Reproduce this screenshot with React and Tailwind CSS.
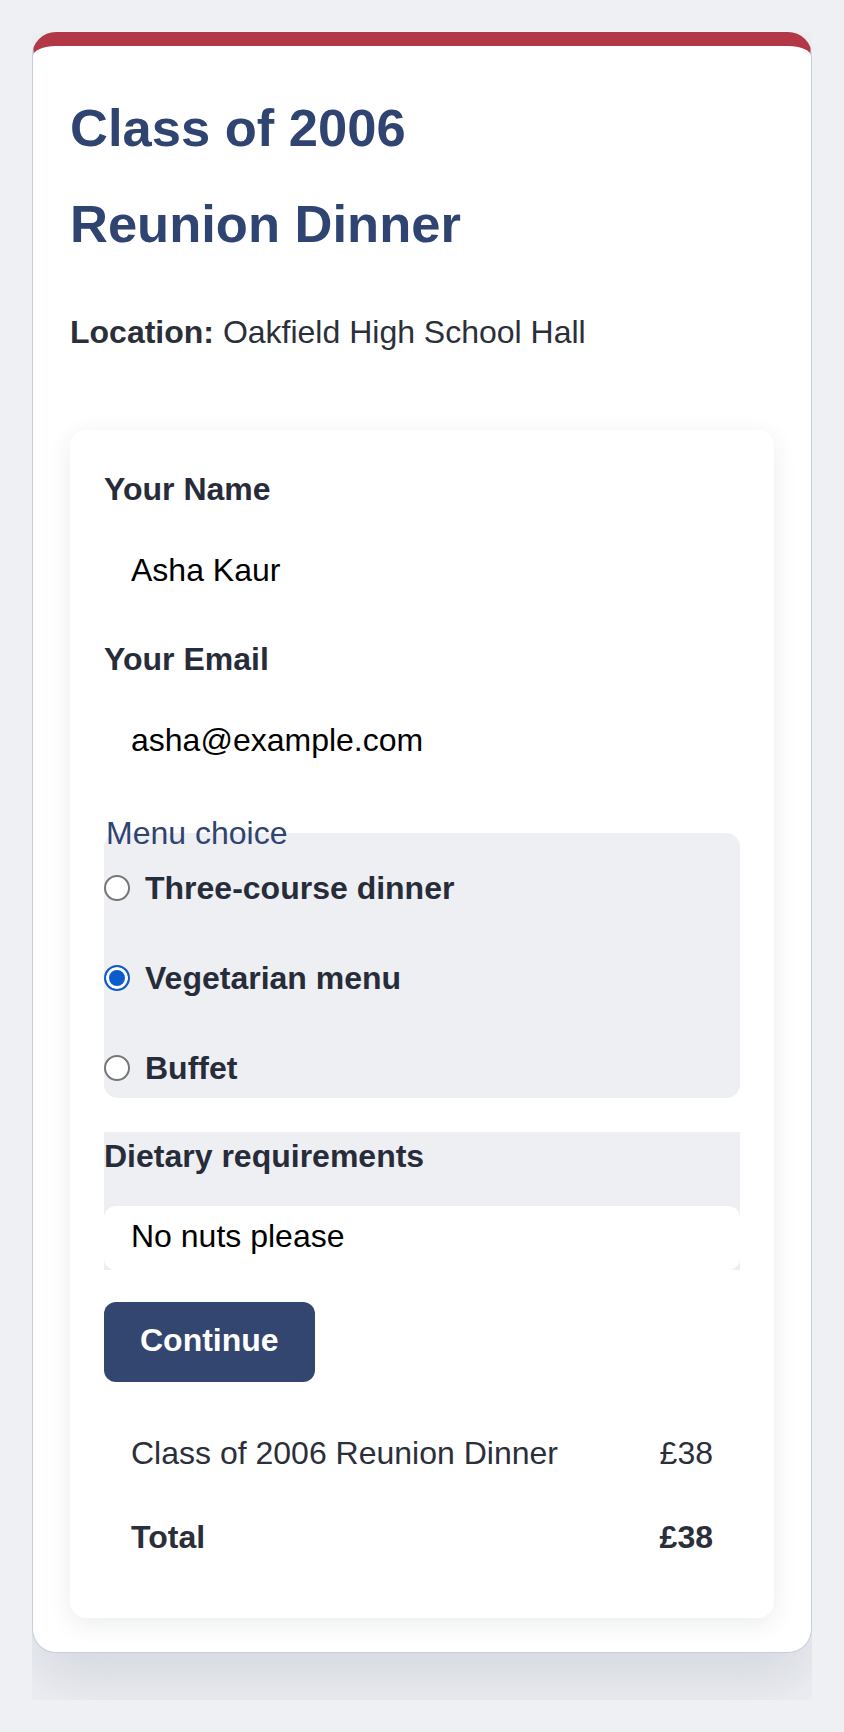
export default function App() {
  const options = [
    { id: "three", label: "Three-course dinner", checked: false },
    { id: "veg", label: "Vegetarian menu", checked: true },
    { id: "buffet", label: "Buffet", checked: false },
  ];
  return (
    <div className="min-h-screen bg-[#eef0f4] pt-[32px] font-['Liberation_Sans',Arial,sans-serif]">
      <div className="mx-[32px] overflow-hidden pb-[47px]">
        <div className="rounded-[24px] border border-[#c6cede] border-t-[14px] border-t-[#b23847] bg-white px-[37px] pt-[34px] pb-[34px] shadow-[0_30px_60px_rgba(30,40,70,0.12)]">
          <h1 className="text-[52.5px] leading-[96px] font-bold text-balance text-[#2f4471]">
            Class of 2006 Reunion Dinner
          </h1>
          <p className="mt-[36px] text-[32px] leading-[48px] text-[#2b2f3a]">
            <strong className="font-bold">Location:</strong> Oakfield High School Hall
          </p>

          <form
            className="mt-[74px] rounded-[16px] bg-white px-[34px] pt-[35px] pb-[39px] shadow-[0_6px_24px_rgba(30,40,70,0.09)]"
            onSubmit={(e) => e.preventDefault()}
          >
            <label className="block text-[32px] leading-[48px] font-bold text-[#272c3a]" htmlFor="name">
              Your Name
            </label>
            <input
              id="name"
              type="text"
              defaultValue="Asha Kaur"
              className="mt-[25px] block h-[64px] w-full bg-transparent px-[27px] text-[32px] text-black outline-none"
            />

            <label className="mt-[33px] block text-[32px] leading-[48px] font-bold text-[#272c3a]" htmlFor="email">
              Your Email
            </label>
            <input
              id="email"
              type="email"
              defaultValue="asha@example.com"
              className="mt-[25px] block h-[64px] w-full bg-transparent px-[27px] text-[32px] text-black outline-none"
            />

            <div className="mt-[37px]">
              <div className="relative z-10 pl-[2px] text-[32px] leading-[48px] text-[#2f4471]">Menu choice</div>
              <div className="-mt-[24px] flex flex-col gap-[42px] rounded-[14px] bg-[#eeeff3] pt-[31px] pb-[6px]">
                {options.map((o) => (
                  <label key={o.id} className="flex h-[48px] items-center gap-[15px] text-[32px] leading-[48px] font-bold text-[#272c3a]">
                    <input
                      type="radio"
                      name="menu"
                      defaultChecked={o.checked}
                      className="m-0 h-[26px] w-[26px] shrink-0 appearance-none rounded-full border-2 border-[#767676] bg-white checked:border-[#0c5ccd] checked:bg-[#0c5ccd] checked:shadow-[inset_0_0_0_3px_#ffffff]"
                    />
                    {o.label}
                  </label>
                ))}
              </div>
            </div>

            <div className="mt-[34px] bg-[#eeeff3]">
              <label className="block text-[32px] leading-[48px] font-bold text-[#272c3a]" htmlFor="diet">
                Dietary requirements
              </label>
              <textarea
                id="diet"
                rows={1}
                defaultValue="No nuts please"
                className="mt-[26px] block h-[64px] w-full resize-none overflow-hidden rounded-[12px] bg-white px-[27px] pt-[6px] text-[32px] leading-[48px] text-black outline-none"
              />
            </div>

            <button
              type="submit"
              className="mt-[32px] flex h-[80px] items-center rounded-[12px] bg-[#334670] px-[36px] pb-[4px] text-[32px] font-bold text-white"
            >
              Continue
            </button>

            <div className="mt-[29px] text-[32px] leading-[48px] text-[#2b2f3a]">
              <div className="flex justify-between px-[27px] py-[18px]">
                <span>Class of 2006 Reunion Dinner</span>
                <span>£38</span>
              </div>
              <div className="flex justify-between px-[27px] py-[18px] font-bold">
                <span>Total</span>
                <span>£38</span>
              </div>
            </div>
          </form>
        </div>
      </div>
    </div>
  );
}
